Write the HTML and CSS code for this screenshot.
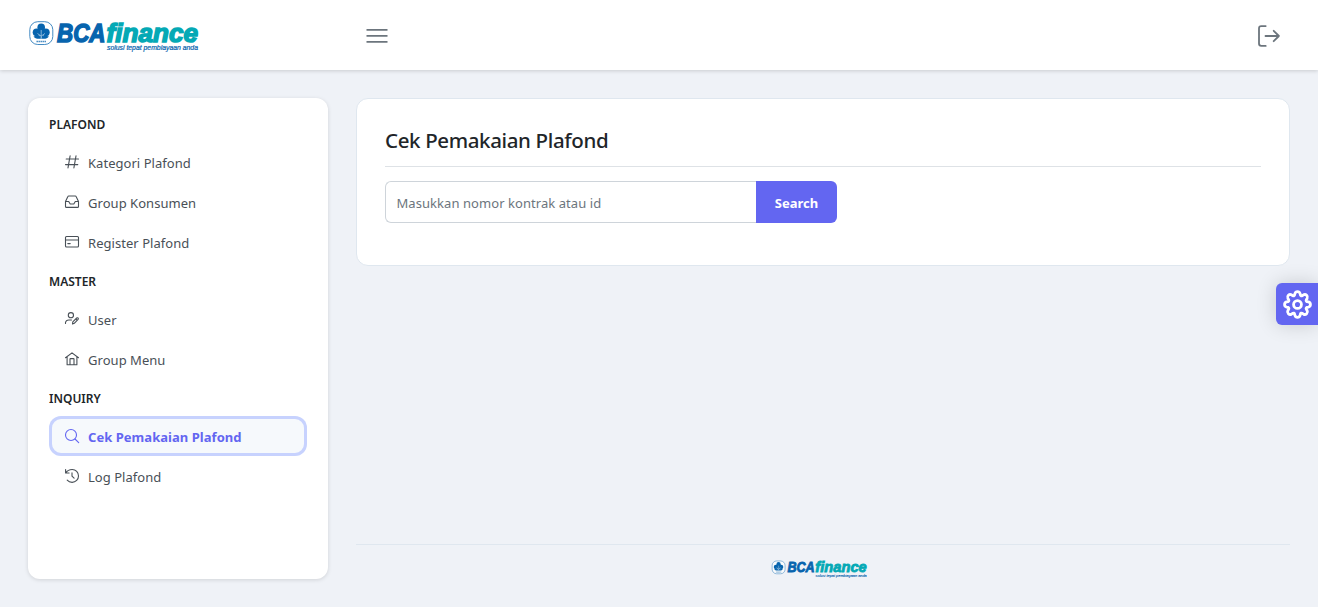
FILE: index.html
```html
<!DOCTYPE html>
<html lang="id">
<head>
<meta charset="utf-8">
<title>Cek Pemakaian Plafond</title>
<link rel="stylesheet" href="styles.css">
</head>
<body>
<svg class="defs" width="0" height="0" aria-hidden="true">
  <symbol id="logo" viewBox="0 0 170 32" overflow="visible">
    <rect x=".8" y="1.700" width="23" height="22.800" rx="8" fill="#fff" fill-opacity=".65" stroke="#438ac3" stroke-width="1"/>
    <g fill="#0764ae">
      <circle cx="12.200" cy="7.400" r="3.800"/><circle cx="7.600" cy="12.300" r="3.900"/><circle cx="16.800" cy="12.300" r="3.900"/>
      <path d="M10.800 9h2.800l.5 8h-3.800zM4.500 16.500c4-1.300 6-.6 7.700 1 1.700-1.600 3.700-2.300 7.700-1-1.500 2.200-4.500 2.800-7.700 2-3.200.8-6.200.2-7.700-2z"/>
    </g>
    <path d="M7.500 21.500h9.600" stroke="#0764ae" stroke-width="1.400" stroke-dasharray="1.400 .6" opacity=".8"/>
    <path d="M12.200 10v8M8.500 13.500l3.700 2.700 3.700-2.700" stroke="#d9eaf5" stroke-width=".6" fill="none"/>
    <text class="logo-bca" x="28" y="21.700" textLength="48.500" lengthAdjust="spacingAndGlyphs">BCA</text>
    <text class="logo-finance" x="77.500" y="21.700" textLength="91.500" lengthAdjust="spacingAndGlyphs">finance</text>
    <text class="logo-tag" x="78" y="29.700" textLength="91" lengthAdjust="spacingAndGlyphs">solusi tepat pembiayaan anda</text>
  </symbol>
</svg>

<header class="topbar">
  <svg class="brand" role="img" aria-label="BCA finance"><use href="#logo"/></svg>
  <button class="icon-button menu-button" aria-label="Menu">
    <svg width="22" height="22" viewBox="0 0 22 22"><path d="M.5 4.900h21M.5 10.900h21M.5 16.900h21" stroke="#6c757d" stroke-width="1.800"/></svg>
  </button>
  <button class="icon-button logout-button" aria-label="Keluar">
    <svg width="22" height="22" viewBox="0 0 22 22" fill="none" stroke="#6c757d" stroke-width="1.800" stroke-linecap="round" stroke-linejoin="round"><path d="M7.700 1.100H3.300Q1 1.100 1 3.400v15.200Q1 20.900 3.300 20.900h4.400M7.500 11h13.400M15.700 5.800l5.200 5.200-5.200 5.200"/></svg>
  </button>
</header>

<div class="layout">
  <nav class="sidebar">
    <h2 class="group-title">PLAFOND</h2>
    <a class="item"><svg class="icon" viewBox="0 0 14 14"><path d="M1.200 4h12.300M.5 9.600h12.300M5.100.800L3 12.900M11 .800L8.900 12.900"/></svg><span>Kategori Plafond</span></a>
    <a class="item"><svg class="icon" viewBox="0 0 14 14"><path d="M.5 6.500L2.900 1.500Q3.100 1 3.700 1h6.600q.6 0 .8.500l2.400 5v4.900q0 1-1 1h-11q-1 0-1-1zM.5 6.500h3.200L5.200 9h3.600l1.500-2.500h3.200"/></svg><span>Group Konsumen</span></a>
    <a class="item"><svg class="icon" viewBox="0 0 14 14"><rect x=".5" y="1.500" width="13" height="10.500" rx="1"/><path d="M.5 5h13M2.800 8.600h2.400"/></svg><span>Register Plafond</span></a>

    <h2 class="group-title">MASTER</h2>
    <a class="item"><svg class="icon" viewBox="0 0 14 14"><circle cx="5.900" cy="3.200" r="2.600"/><path d="M.5 11.500V10.500Q1 8 3.800 8h2.700M7.500 12l.3-2.100 3.900-3.900q.7-.6 1.400 0 .6.700 0 1.400L9.300 11.300zM10.800 6.900l1.400 1.400"/></svg><span>User</span></a>
    <a class="item"><svg class="icon" viewBox="0 0 14 14"><path d="M.5 5.700L7 .900l6.500 4.800M2.100 4.700v8h9.800v-8M5 12.700V7.100q0-.5.500-.5h3q.5 0 .5.500v5.600"/></svg><span>Group Menu</span></a>

    <h2 class="group-title">INQUIRY</h2>
    <a class="item active"><svg class="icon" viewBox="0 0 14 14"><circle cx="6" cy="6" r="5.500"/><path d="M10 10l3.700 3.700"/></svg><span>Cek Pemakaian Plafond</span></a>
    <a class="item"><svg class="icon" viewBox="0 0 14 14"><path d="M.600.500V4h3.500M.800 3.900Q2.900.500 7.200.500c3.600 0 6.300 2.900 6.300 6.400s-2.800 6.500-6.400 6.500c-2 0-3.700-.8-4.900-2.200M7 3.900v3.300l2.100 2"/></svg><span>Log Plafond</span></a>
  </nav>

  <div class="content">
    <main class="card">
      <h1 class="title">Cek Pemakaian Plafond</h1>
      <form class="search">
        <input class="search-input" type="text" placeholder="Masukkan nomor kontrak atau id">
        <button class="search-button" type="button">Search</button>
      </form>
    </main>
    <footer class="footer">
      <svg class="footer-logo" role="img" aria-label="BCA finance"><use href="#logo"/></svg>
    </footer>
  </div>
</div>

<button class="settings" aria-label="Pengaturan">
  <svg width="29" height="29" viewBox="0 0 28 28" fill="none" stroke="#fff" stroke-width="2.700" stroke-linejoin="round"><path d="M11.500 3.400a2.600 2.600 0 0 1 5 0l.3 1.500q.5 1.200 1.700.6l1.300-.8a2.600 2.600 0 0 1 3.500 3.500l-.8 1.300q-.6 1.200.6 1.700l1.500.3a2.600 2.600 0 0 1 0 5l-1.500.3q-1.200.5-.6 1.700l.8 1.300a2.600 2.600 0 0 1-3.500 3.500l-1.300-.8q-1.200-.6-1.700.6l-.3 1.500a2.600 2.600 0 0 1-5 0l-.3-1.500q-.5-1.200-1.700-.6l-1.300.8a2.600 2.600 0 0 1-3.500-3.500l.8-1.300q.6-1.200-.6-1.700l-1.500-.3a2.600 2.600 0 0 1 0-5l1.500-.3q1.200-.5.600-1.700l-.8-1.300a2.600 2.600 0 0 1 3.500-3.500l1.300.8q1.200.6 1.700-.6z"/><circle cx="14" cy="14" r="3.800"/></svg>
</button>
</body>
</html>
```
FILE: styles.css
```css
* { box-sizing: border-box; }

body {
  margin: 0;
  height: 607px;
  overflow: hidden;
  display: flex;
  flex-direction: column;
  background: #eff2f7;
  color: #212529;
  font-family: "Segoe UI", "Noto Sans", "Open Sans", sans-serif;
  font-size: 14px;
}

.defs { position: absolute; }

.logo-bca, .logo-finance {
  font: italic 700 26px "Liberation Sans", sans-serif;
  stroke-width: 1.500px;
}
.logo-bca { fill: #0764ae; stroke: #0764ae; }
.logo-finance { fill: #04a9b5; stroke: #04a9b5; }
.logo-tag { font: italic 6.500px "Liberation Sans", sans-serif; fill: #0764ae; stroke: #0764ae; stroke-width: .2px; }

.topbar {
  flex: none;
  height: 70px;
  display: flex;
  align-items: center;
  padding: 1px 38px 0 29px;
  background: #fff;
  box-shadow: 0 1px 4px rgba(0, 0, 0, .16);
}
.brand { width: 170px; height: 32px; margin-right: 167px; overflow: visible; }

.icon-button { display: flex; padding: 0; border: 0; background: none; }
.logout-button { margin-left: auto; }

.layout {
  flex: 1;
  display: flex;
  gap: 28px;
  padding: 28px 28px 28px;
}

.sidebar {
  width: 300px;
  padding: 8px 21px;
  border-radius: 12px;
  background: #fff;
  box-shadow: 0 1px 4px rgba(0, 0, 0, .13);
}

.group-title {
  height: 37px;
  margin: 0;
  line-height: 37px;
  font-size: 12px;
  font-weight: 600;
}

.item {
  display: flex;
  align-items: center;
  gap: 9px;
  height: 40px;
  padding: 0 16px;
  border-radius: 12px;
  color: #495057;
  font-size: 13px;
  letter-spacing: .04px;
}
.icon {
  width: 14px;
  height: 14px;
  margin-top: -2px;
  overflow: visible;
  fill: none;
  stroke: currentColor;
  stroke-width: 1.100;
  stroke-linecap: round;
  stroke-linejoin: round;
}
.active {
  height: 40px;
  margin: -1px 0 1px;
  padding-top: 2px;
  color: #6366f1;
  font-weight: 700;
  background: #f6f9fc;
  box-shadow: inset 0 0 0 3px #c7d2fe;
}

.content {
  flex: 1;
  display: flex;
  flex-direction: column;
  justify-content: space-between;
}

.card {
  height: 168px;
  padding: 27px 28px;
  border: 1px solid #dfe7ef;
  border-radius: 12px;
  background: #fff;
}
.title {
  height: 41px;
  margin: 0 0 14px;
  border-bottom: 1px solid #dee2e6;
  line-height: 28px;
  font-size: 20.500px;
  font-weight: 500;
  letter-spacing: -.36px;
}

.search { display: flex; width: 452px; height: 42px; }
.search-input {
  flex: 1;
  min-width: 0;
  padding: 2px 10.500px 0;
  border: 1px solid #ced4da;
  border-right: 0;
  border-radius: 6px 0 0 6px;
  font: 13px "Segoe UI", "Noto Sans", "Open Sans", sans-serif;
  letter-spacing: .06px;
}
.search-input::placeholder { color: #6c757d; opacity: 1; }
.search-button {
  width: 81px;
  padding: 2px 0 0;
  border: 0;
  border-radius: 0 6px 6px 0;
  background: #6366f1;
  color: #fff;
  font: 700 13px "Segoe UI", "Noto Sans", "Open Sans", sans-serif;
}

.footer {
  height: 35px;
  display: flex;
  justify-content: center;
  padding-top: 15px;
  border-top: 1px solid #dfe7ef;
}
.footer-logo { width: 97px; height: 18px; margin-right: 8px; overflow: visible; }

.settings {
  position: absolute;
  top: 283px;
  right: 0;
  width: 42px;
  height: 42px;
  display: flex;
  align-items: center;
  justify-content: center;
  padding: 0;
  border: 0;
  border-radius: 6px 0 0 6px;
  background: #6366f1;
  box-shadow: 0 0 20px rgba(0, 0, 0, .16);
}
```
